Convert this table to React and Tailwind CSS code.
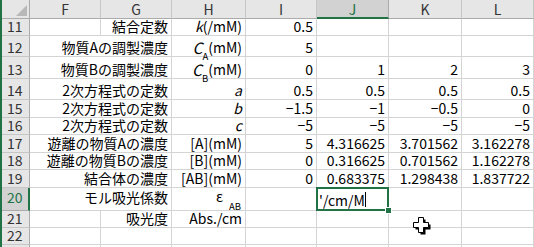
import React from 'react';

// column widths of the sheet (row header + F..L)
const W = {
  F: 'w-[71px]',
  G: 'w-[71px]',
  FG: 'w-[142px]',
  H: 'w-[74px]',
  I: 'w-[71px]',
  J: 'w-[72px]',
  K: 'w-[73px]',
};

const Sub = ({ children }) => <sub className="text-[9.5px]">{children}</sub>;

const rows = [
  { n: 11, h: 'h-[17px]', g: '結合定数', unit: <><i>k</i>(/mM)</>, v: ['0.5', '', '', ''] },
  { n: 12, h: 'h-[21px]', fg: '物質Aの調製濃度', unit: <><i className="text-[15.5px]">C</i><Sub>A</Sub>(mM)</>, v: ['5', '', '', ''] },
  { n: 13, h: 'h-[22px]', fg: '物質Bの調製濃度', unit: <><i className="text-[15.5px]">C</i><Sub>B</Sub>(mM)</>, v: ['0', '1', '2', '3'] },
  { n: 14, h: 'h-[21px]', fg: '2次方程式の定数', unit: <i>a</i>, v: ['0.5', '0.5', '0.5', '0.5'] },
  { n: 15, h: 'h-[18px]', fg: '2次方程式の定数', unit: <i>b</i>, v: ['−1.5', '−1', '−0.5', '0'] },
  { n: 16, h: 'h-[17px]', fg: '2次方程式の定数', unit: <i>c</i>, v: ['−5', '−5', '−5', '−5'] },
  { n: 17, h: 'h-[18px]', fg: '遊離の物質Aの濃度', unit: '[A](mM)', v: ['5', '4.316625', '3.701562', '3.162278'] },
  { n: 18, h: 'h-[17px]', fg: '遊離の物質Bの濃度', unit: '[B](mM)', v: ['0', '0.316625', '0.701562', '1.162278'] },
  { n: 19, h: 'h-[18px]', fg: '結合体の濃度', unit: '[AB](mM)', v: ['0', '0.683375', '1.298438', '1.837722'] },
  {
    n: 20,
    h: 'h-[23px]',
    fg: 'モル吸光係数',
    unit: <><span className="mb-[1px]">ε</span><span className="w-[6px]" /><Sub>AB</Sub><span className="w-[1px]" /></>,
    v: ['', '', '', ''],
    active: true,
  },
  { n: 21, h: 'h-[17px]', g: '吸光度', unit: 'Abs./cm', v: ['', '', '', ''] },
  { n: 22, h: 'h-[17px]', g: '', unit: '', v: ['', '', '', ''] },
  { n: '', h: 'h-[17px]', g: '', unit: '', v: ['', '', '', ''] },
];

function Cell({ w, children, pb = 'pb-[2px]', className = '' }) {
  return (
    <div
      className={`${w} shrink-0 border-r border-b border-[#d4d4d4] flex items-end justify-end pr-[3px] whitespace-nowrap ${pb} ${className}`}
    >
      {children}
    </div>
  );
}

function ColHead({ w, label, selected }) {
  return (
    <div
      className={`${w} shrink-0 flex items-center justify-center border-r ${
        selected
          ? 'bg-[#d2d2d2] text-[#217346] border-r-[#ababab] border-b-2 border-b-[#217346]'
          : 'bg-[#e6e6e6] text-[#333] border-r-[#c6c6c6] border-b border-b-[#ababab]'
      }`}
    >
      {label}
    </div>
  );
}

function EditingCell() {
  return (
    <div className={`${W.J} shrink-0 relative border-r border-b border-[#d4d4d4] flex items-end pb-[3px] pl-[2px] whitespace-nowrap`}>
      <span>'/cm/M</span>
      <span className="w-px h-[15px] bg-black" />
      <div className="absolute -left-px -top-px -right-px -bottom-px border-2 border-[#217346]" />
      <div className="absolute -right-[4px] -bottom-[4px] w-[7px] h-[7px] bg-[#217346] border border-white" />
    </div>
  );
}

export default function App() {
  return (
    <div className="relative w-[534px] h-[247px] overflow-hidden bg-white border-l-2 border-[#217346] font-['Noto_Sans_CJK_JP',sans-serif] text-[14px] leading-[14px] text-black">
      {/* column header */}
      <div className="flex h-[19px]">
        <div className="w-[28px] shrink-0 bg-[#e6e6e6] border-r border-b border-[#ababab] flex items-end justify-end p-[2px]">
          <svg width="11" height="11" viewBox="0 0 11 11">
            <polygon points="11,0 11,11 0,11" fill="#b8b8b8" />
          </svg>
        </div>
        <ColHead w={W.F} label="F" />
        <ColHead w={W.G} label="G" />
        <ColHead w={W.H} label="H" />
        <ColHead w={W.I} label="I" />
        <ColHead w={W.J} label="J" selected />
        <ColHead w={W.K} label="K" />
        <ColHead w="flex-1" label="L" />
      </div>

      {rows.map((r, idx) => {
        const pb = r.active ? 'pb-[6px]' : 'pb-[2px]';
        return (
          <div key={idx} className={`flex ${r.h}`}>
            <div
              className={`w-[28px] shrink-0 flex items-end pl-[5px] border-b ${pb} ${
                r.active
                  ? 'bg-[#d2d2d2] text-[#217346] border-r-2 border-r-[#217346] border-b-[#ababab]'
                  : 'bg-[#e6e6e6] text-[#333] border-r border-r-[#ababab] border-b-[#c6c6c6]'
              }`}
            >
              {r.n}
            </div>
            {r.fg !== undefined ? (
              <Cell w={W.FG} pb={pb}>{r.fg}</Cell>
            ) : (
              <>
                <Cell w={W.F} />
                <Cell w={W.G}>{r.g}</Cell>
              </>
            )}
            <Cell w={W.H} pb={pb}>{r.unit}</Cell>
            <Cell w={W.I}>{r.v[0]}</Cell>
            {r.active ? <EditingCell /> : <Cell w={W.J}>{r.v[1]}</Cell>}
            <Cell w={W.K}>{r.v[2]}</Cell>
            <Cell w="flex-1">{r.v[3]}</Cell>
          </div>
        );
      })}

      {/* cell-select pointer */}
      <svg className="absolute left-[411px] top-[217px]" width="18" height="18" viewBox="0 0 18 18">
        <path d="M6.5 1.5h5v5h5v5h-5v5h-5v-5h-5v-5h5z" fill="#000" transform="translate(1 1)" />
        <path d="M5.5 0.5h5v5h5v5h-5v5h-5v-5h-5v-5h5z" fill="#fff" stroke="#000" strokeWidth="1" strokeLinejoin="round" />
      </svg>
    </div>
  );
}
